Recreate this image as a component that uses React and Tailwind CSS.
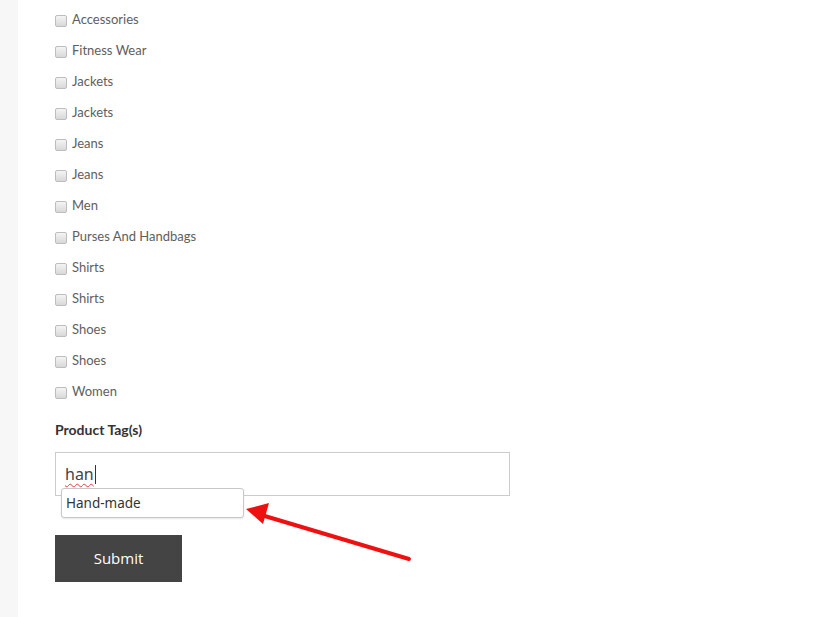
import React from 'react';

const categories = [
  'Accessories',
  'Fitness Wear',
  'Jackets',
  'Jackets',
  'Jeans',
  'Jeans',
  'Men',
  'Purses And Handbags',
  'Shirts',
  'Shirts',
  'Shoes',
  'Shoes',
  'Women',
];

const CategoryRow = ({ label }) => (
  <label className="flex h-[31px] items-center">
    <span className="mt-[2px] h-[12px] w-[12px] rounded-[2px] border border-[#bdbdbd] bg-gradient-to-b from-[#f4f4f4] to-[#d8d8d8]" />
    <span className="ml-[5px] text-[13px] text-[#5e5e5e]">{label}</span>
  </label>
);

// red annotation arrow pointing at the suggestion box
const Arrow = () => (
  <svg className="pointer-events-none absolute left-0 top-0" width="420" height="130" viewBox="0 0 420 130">
    <line x1="354" y1="107" x2="203" y2="62" stroke="#ee1111" strokeWidth="4" strokeLinecap="round" />
    <polygon points="191,57 214,51 208,72" fill="#ee1111" />
  </svg>
);

const App = () => {
  return (
    <div className="flex h-[617px] w-[820px] bg-white" style={{ fontFamily: 'Lato, "Open Sans", sans-serif' }}>
      <div className="w-[18px] shrink-0 bg-[#f7f7f7]" />
      <div className="flex-1 pl-[37px] pt-[4px]">
        <div className="flex flex-col">
          {categories.map((c, i) => (
            <CategoryRow key={i} label={c} />
          ))}
        </div>

        <h3 className="mt-[12px] text-[14px] font-bold text-[#333]">Product Tag(s)</h3>

        <div className="relative mt-[12px]">
          <div className="flex h-[44px] w-[455px] items-center border border-[#cccccc] px-[9px]">
            <span
              className="text-[16px] text-[#444] underline decoration-wavy decoration-[#e04040] decoration-1 underline-offset-[3px]"
              style={{ fontFamily: '"Noto Sans", sans-serif' }}
            >
              han
            </span>
            <span className="ml-[1px] h-[19px] w-[1px] bg-[#333]" />
          </div>
          <div className="absolute left-[6px] top-[36px] flex h-[30px] w-[183px] items-center rounded-[3px] border border-[#c8c8c8] bg-white px-[4px] shadow-[0_1px_2px_rgba(0,0,0,0.1)]">
            <span className="text-[13.5px] text-[#333]" style={{ fontFamily: '"Noto Sans", sans-serif' }}>
              Hand-made
            </span>
          </div>
          <Arrow />
        </div>

        <button
          className="mt-[39px] h-[47px] w-[127px] bg-[#444] text-[15px] font-medium text-white"
          style={{ fontFamily: '"Open Sans", sans-serif' }}
        >
          Submit
        </button>
      </div>
    </div>
  );
};

export default App;
